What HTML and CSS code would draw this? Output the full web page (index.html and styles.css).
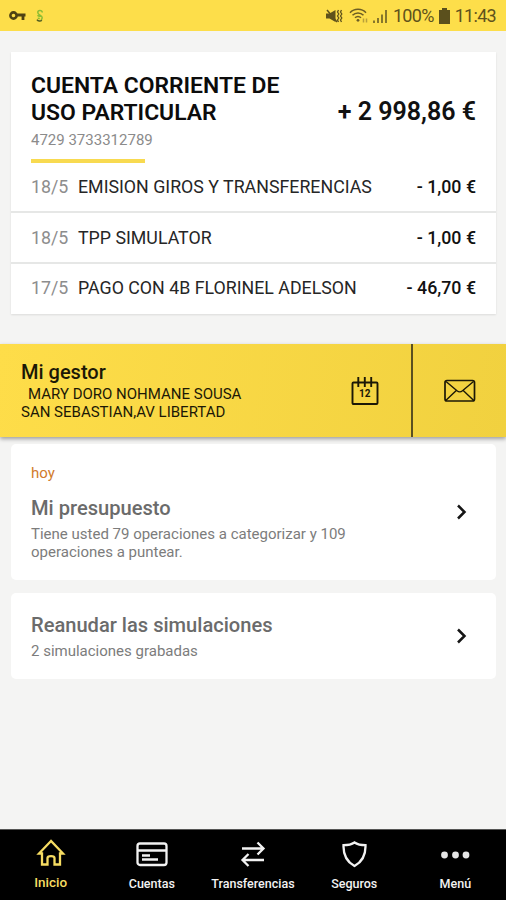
FILE: index.html
```html
<!DOCTYPE html>
<html lang="es">
  <head>
    <meta charset="UTF-8" />
    <meta name="viewport" content="width=device-width, initial-scale=1.0" />
    <title>Inicio</title>
    <link rel="stylesheet" href="styles.css">
  </head>
  <body>
    <header class="status-bar">
      <svg class="key" width="18" height="12" viewBox="0 0 18 12">
        <circle cx="4.5" cy="5.5" r="3.1" fill="none" stroke="#4e4213" stroke-width="2.6" />
        <path d="M8 5h8.5M14 5v5" fill="none" stroke="#4e4213" stroke-width="2.8" />
      </svg>
      <svg class="snake" width="8" height="14" viewBox="0 0 8 14">
        <path d="M6.3 3.5C6 .8 1.8.8 1.8 3.6c0 2.6 4.4 2.5 4.4 5.2 0 1-.6 1.7-1.4 2M1.8 5.8c.2 1.8 2.4 1.6 3.6 1M1.8 9.3l2 .2" fill="none" stroke="#8ebd35" stroke-width="1.5" />
        <path d="M1 10.6c1 1.6 3.4 2 4.8.6" fill="none" stroke="#4e5b20" stroke-width="1.6" />
      </svg>
      <div class="status-right">
        <svg width="18" height="16" viewBox="0 0 18 16">
          <path d="M1 5.5h3.5L10.5 2v12L4.5 10.5H1z" fill="#5f521c" />
          <path d="M2 2l10 12" stroke="#5f521c" stroke-width="1.5" />
          <path d="M13.5 2l-1 2 1.3 2-1.3 2 1.3 2-1.3 2 1 2M16.500 2l-1 2 1.3 2-1.3 2 1.3 2-1.3 2 1 2" fill="none" stroke="#5f521c" stroke-width="1.3" />
        </svg>
        <svg class="wifi" width="20" height="16" viewBox="0 0 20 16">
          <path d="M1 4.8c4.2-4.6 11.8-4.6 16 0M3.5 7.3c3-3.2 8-3.2 11 0M6 9.8c1.8-1.9 4.2-1.9 6 0" fill="none" stroke="#6c5e24" stroke-width="1.5" />
          <circle cx="9" cy="12.3" r="1.4" fill="#6c5e24" />
          <path d="M14.5 14.5v-4M17.5 10.5v4" stroke="#b9a03b" stroke-width="1.5" />
        </svg>
        <svg class="signal" width="16" height="16" viewBox="0 0 16 16">
          <path d="M2 15v-2.5M6 15v-5M10 15V6.5M14 15V2" stroke="#736527" stroke-width="1.7" />
        </svg>
        <span class="percent">100%</span>
        <svg class="battery" width="11" height="16" viewBox="0 0 11 16">
          <path d="M3 0h5v2h3v14H0V2h3z" fill="#5b501d" />
        </svg>
        <span>11:43</span>
      </div>
    </header>

    <main>
      <section class="account">
        <div class="account-head">
          <div>
            <h1>CUENTA CORRIENTE DE<br>USO PARTICULAR</h1>
            <p class="number">4729 3733312789</p>
          </div>
          <p class="balance">+ 2 998,86 €</p>
        </div>
        <div class="underline"></div>
        <ul class="moves">
          <li><span class="date">18/5</span><span class="concept">EMISION GIROS Y TRANSFERENCIAS</span><span class="amount">- 1,00 €</span></li>
          <li><span class="date">18/5</span><span class="concept">TPP SIMULATOR</span><span class="amount">- 1,00 €</span></li>
          <li><span class="date">17/5</span><span class="concept">PAGO CON 4B FLORINEL ADELSON</span><span class="amount">- 46,70 €</span></li>
        </ul>
      </section>

      <section class="manager">
        <div class="manager-info">
          <h2>Mi gestor</h2>
          <p class="manager-name">MARY DORO NOHMANE SOUSA</p>
          <p class="manager-office">SAN SEBASTIAN,AV LIBERTAD</p>
        </div>
        <svg class="calendar" width="28" height="30" viewBox="0 0 28 30">
          <rect x="1.500" y="6.500" width="25" height="21.500" rx="1" fill="none" stroke="#1c1806" stroke-width="1.9" />
          <path d="M7.3 1v10M13.8 1v10M20.2 1v10" stroke="#1c1806" stroke-width="1.9" />
          <text x="13.8" y="21" text-anchor="middle">12</text>
        </svg>
        <div class="mail">
          <svg width="32" height="24" viewBox="0 0 32 24">
            <rect x="1" y="1.5" width="29.5" height="20.5" rx="2" fill="none" stroke="#1c1806" stroke-width="1.7" />
            <path d="M2 2.5l11 9.3q2.8 2.2 5.5 0L29.5 2.500M2 21.2l10.3-9.8M29.5 21.2L19.2 11.4" fill="none" stroke="#1c1806" stroke-width="1.4" />
          </svg>
        </div>
      </section>

      <section class="card budget">
        <div>
          <p class="today">hoy</p>
          <h2>Mi presupuesto</h2>
          <p class="detail">Tiene usted 79 operaciones a categorizar y 109<br>operaciones a puntear.</p>
        </div>
        <svg class="chevron" width="12" height="16" viewBox="0 0 12 16"><path d="M2 1.5L8.5 8 2 14.5" /></svg>
      </section>

      <section class="card simulations">
        <div>
          <h2>Reanudar las simulaciones</h2>
          <p class="detail">2 simulaciones grabadas</p>
        </div>
        <svg class="chevron" width="12" height="16" viewBox="0 0 12 16"><path d="M2 1.5L8.5 8 2 14.5" /></svg>
      </section>
    </main>

    <nav class="tabs">
      <a class="tab active">
        <svg width="30" height="30" viewBox="0 0 30 30"><path d="M15 3L3 15.5h3v11h5.5V20c0-2.500 7-2.500 7 0v6.500H24v-11h3z" /></svg>
        <span>Inicio</span>
      </a>
      <a class="tab">
        <svg width="32" height="30" viewBox="0 0 32 30"><rect x="1.5" y="5.5" width="29" height="21.500" rx="2.5" /><path d="M1.5 12.5h29M6 17.5h8M6 21.500h16" /></svg>
        <span>Cuentas</span>
      </a>
      <a class="tab">
        <svg width="28" height="30" viewBox="0 0 28 30"><path d="M3 10.5h22M18.5 4.500l6 6-6 6M25 22H3M9.5 16l-6 6 6 6" /></svg>
        <span>Transferencias</span>
      </a>
      <a class="tab">
        <svg width="26" height="30" viewBox="0 0 26 30"><path d="M13.5 4.5C10.5 6.5 7 7.2 2.5 7.2c-.3 9 3 16.5 11 20.8 8-4.3 11.3-11.8 11-20.8-4.5 0-8-.7-11-2.7z" /></svg>
        <span>Seguros</span>
      </a>
      <a class="tab">
        <svg class="dots" width="30" height="30" viewBox="0 0 30 30"><circle cx="4.5" cy="17" r="3.4" /><circle cx="15.5" cy="17" r="3.4" /><circle cx="26" cy="17" r="3.4" /></svg>
        <span>Menú</span>
      </a>
    </nav>
  </body>
</html>
```
FILE: styles.css
```css
* {
  margin: 0;
  padding: 0;
  box-sizing: border-box;
}

body {
  height: 900px;
  overflow: hidden;
  display: flex;
  flex-direction: column;
  background: #f4f4f3;
  font-family: Roboto, "Liberation Sans", sans-serif;
  color: #111;
}

main {
  flex: 1;
}

.status-bar {
  height: 31px;
  display: flex;
  align-items: center;
  padding: 0 10px 0 9px;
  background: #fdde4a;
}

.snake {
  margin-left: 9px;
}

.status-right {
  margin-left: auto;
  display: flex;
  align-items: center;
  font-size: 18px;
  line-height: 32px;
  letter-spacing: -0.7px;
  color: #5f521c;
}

.wifi {
  margin-left: 6px;
}

.signal {
  margin-left: 3px;
}

.percent {
  margin-left: 5px;
}

.battery {
  margin: 0 5px;
}

.account {
  height: 262px;
  margin: 21px 10px 0 11px;
  background: #fff;
  box-shadow: 0 1px 2px rgba(0, 0, 0, 0.1);
}

.account-head {
  height: 107px;
  padding: 20px 20px 0;
  display: flex;
  justify-content: space-between;
}

.account h1 {
  font-size: 22.9px;
  line-height: 27px;
  font-weight: 600;
  color: #0c0c0c;
}

.number {
  margin-top: 4px;
  font-size: 15px;
  line-height: 20px;
  color: #8b8b8b;
}

.balance {
  margin-top: 24px;
  font-size: 25px;
  line-height: 32px;
  font-weight: 600;
}

.underline {
  width: 114px;
  height: 4px;
  margin-left: 20px;
  background: #f8da50;
}

.moves {
  list-style: none;
}

.moves li {
  height: 51px;
  display: flex;
  align-items: center;
  padding: 0 20px;
  border-top: 2px solid #e6e7e6;
  font-size: 17.8px;
}

.moves li:first-child {
  height: 48px;
  padding-bottom: 2px;
  border-top: none;
}

.moves li:last-child {
  height: 50px;
  padding-bottom: 2px;
}

.date {
  width: 47px;
  color: #8d8d8d;
}

.concept {
  color: #262626;
}

.amount {
  margin-left: auto;
  font-weight: 500;
}

.manager {
  position: relative;
  height: 93px;
  margin-top: 30px;
  display: flex;
  align-items: center;
  background: linear-gradient(100deg, #fedd49, #f1d13f);
  box-shadow: 0 2px 4px rgba(0, 0, 0, 0.35);
  color: #1c1806;
}

.manager-info {
  width: 331px;
  padding-left: 21px;
}

.manager h2 {
  margin-bottom: 1px;
  font-size: 20px;
  line-height: 24px;
  font-weight: 500;
}

.manager p {
  font-size: 15px;
  line-height: 18px;
}

.manager-name {
  padding-left: 7px;
}

.calendar {
  margin-left: 20px;
}

.calendar text {
  font-size: 10px;
  font-weight: 700;
  fill: #1c1806;
}

.mail {
  height: 93px;
  flex: 1;
  display: flex;
  align-items: center;
  justify-content: center;
  margin-left: 32px;
  border-left: 2px solid #5b501f;
}

.card {
  margin: 0 10px 0 11px;
  padding: 0 28px 0 20px;
  display: flex;
  justify-content: space-between;
  background: #fff;
  border-radius: 5px;
}

.budget {
  height: 136px;
  margin-top: 7px;
  padding-top: 19px;
}

.simulations {
  height: 86px;
  margin-top: 13px;
  padding-top: 20px;
}

.today {
  margin-bottom: 13px;
  font-size: 15px;
  line-height: 20px;
  color: #d17b2c;
}

.card h2 {
  font-size: 20.1px;
  line-height: 24px;
  font-weight: 500;
  color: #6b6b6b;
}

.detail {
  margin-top: 5px;
  font-size: 15px;
  line-height: 18px;
  color: #7c7c7c;
}

.chevron {
  margin-top: 41px;
  fill: none;
  stroke: #151515;
  stroke-width: 2.5;
}

.simulations .chevron {
  margin-top: 15px;
}

.tabs {
  height: 71px;
  display: grid;
  grid-template-columns: repeat(5, 1fr);
  background: #000;
  border-top: 1px solid #555;
}

.tab {
  display: flex;
  flex-direction: column;
  align-items: center;
  padding-top: 8px;
  font-size: 12.5px;
  line-height: 16px;
  font-weight: 500;
  color: #f2f2f2;
}

.tab svg {
  height: 30px;
  margin-bottom: 8px;
  fill: none;
  stroke: currentColor;
  stroke-width: 2.3;
}

.tab .dots {
  fill: #e6e6e6;
  stroke: none;
}

.tab.active {
  font-size: 13.5px;
  color: #f6dc62;
}

.active svg {
  margin-bottom: 6px;
}
```
